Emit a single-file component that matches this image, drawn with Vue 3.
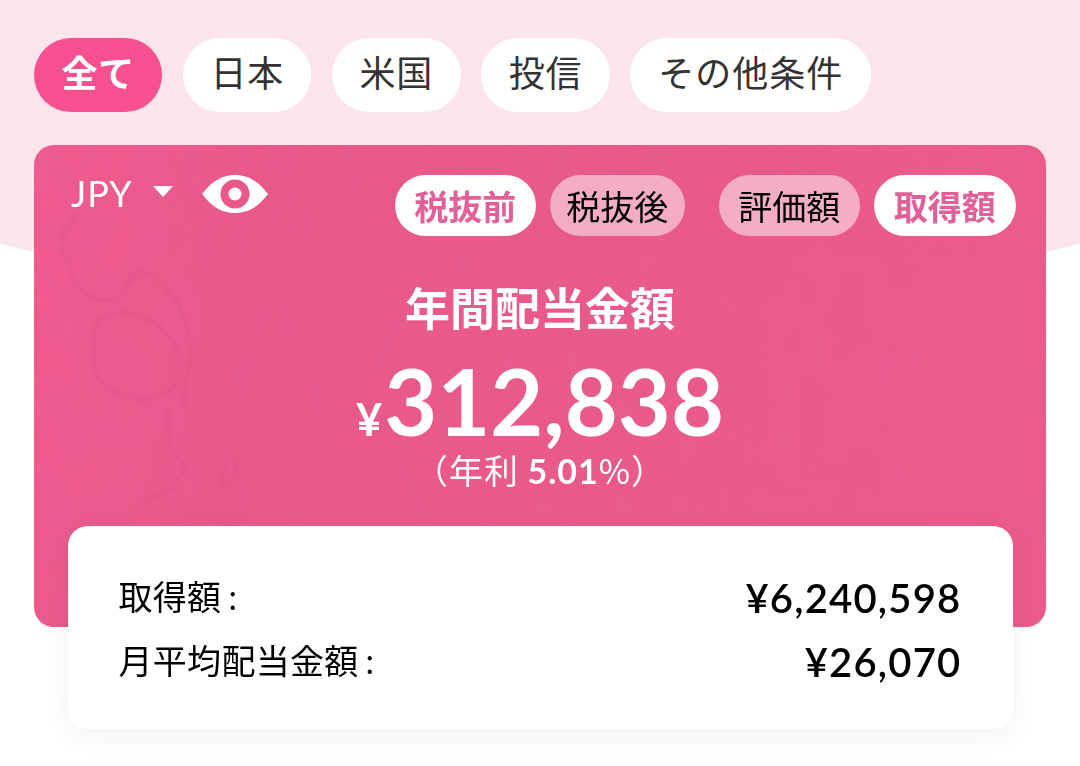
<script setup>
import { ref } from "vue";

// 絞り込みタブ
const filters = ["全て", "日本", "米国", "投信", "その他条件"];
const activeFilter = ref("全て");

const taxModes = ["税抜前", "税抜後"];
const activeTax = ref("税抜前");

const amountModes = ["評価額", "取得額"];
const activeAmount = ref("取得額");

const isVisible = ref(true);

const summary = ref({
    annual: "312,838",
    rate: "5.01",
    rows: [
        { label: "取得額", value: "¥6,240,598" },
        { label: "月平均配当金額", value: "¥26,070" },
    ],
});
</script>

<template>
    <div class="page">
        <nav class="filters">
            <button
                v-for="filter in filters"
                :key="filter"
                class="filter"
                :class="{ active: activeFilter === filter }"
                @click="activeFilter = filter"
            >
                {{ filter }}
            </button>
        </nav>

        <section class="card">
            <!-- 紙の質感 -->
            <svg class="texture" viewBox="0 0 1012 482" preserveAspectRatio="none">
                <defs>
                    <filter id="paper" x="0" y="0" width="100%" height="100%">
                        <feTurbulence type="fractalNoise" baseFrequency="0.03 0.02" numOctaves="4" seed="4" />
                        <feColorMatrix values="0 0 0 0 0.6  0 0 0 0 0.2  0 0 0 0 0.4  0.5 0 0 0 -0.16" />
                    </filter>
                    <filter id="rough">
                        <feTurbulence type="fractalNoise" baseFrequency="0.06" numOctaves="3" seed="2" />
                        <feDisplacementMap in="SourceGraphic" scale="9" />
                        <feGaussianBlur stdDeviation="0.9" />
                    </filter>
                </defs>
                <rect width="1012" height="482" filter="url(#paper)" opacity="0.3" />
                <g class="stains" filter="url(#rough)">
                    <path d="M48 69 C24 87 22 105 34 117 C36 139 52 155 78 155 C90 151 96 138 101 130 C113 116 131 141 144 159 C153 175 157 192 156 216 C153 236 146 252 149 260" />
                    <path d="M79 168 C58 170 58 200 60 220 C64 242 85 254 114 253 C144 249 153 222 143 204 C131 180 109 165 79 168 Z" />
                    <path d="M134 264 C134 292 134 306 151 320 C139 342 124 350 111 360" />
                    <path d="M189 340 C183 324 203 307 204 317 C203 329 197 338 189 340 Z" />
                </g>
            </svg>

            <div class="toolbar">
                <div class="currency">
                    <span>JPY</span>
                    <svg class="caret" viewBox="0 0 20 11"><path d="M0 0H20L10 11Z" /></svg>
                </div>
                <button class="eye" @click="isVisible = !isVisible">
                    <svg viewBox="0 0 66 38">
                        <path d="M0 19C10 6 20 0 33 0S56 6 66 19C56 32 46 38 33 38S10 32 0 19Z" fill="#fff" />
                        <circle cx="33" cy="19" r="14.5" fill="#ea588a" />
                        <circle cx="33" cy="19" r="6.5" fill="#fff" />
                    </svg>
                </button>
                <div class="toggles">
                    <button
                        v-for="mode in taxModes"
                        :key="mode"
                        class="toggle"
                        :class="{ active: activeTax === mode }"
                        @click="activeTax = mode"
                    >
                        {{ mode }}
                    </button>
                </div>
                <div class="toggles">
                    <button
                        v-for="mode in amountModes"
                        :key="mode"
                        class="toggle"
                        :class="{ active: activeAmount === mode }"
                        @click="activeAmount = mode"
                    >
                        {{ mode }}
                    </button>
                </div>
            </div>

            <h2>年間配当金額</h2>
            <p class="amount"><span class="yen">¥</span>{{ isVisible ? summary.annual : "***" }}</p>
            <p class="rate">（年利 <b>{{ summary.rate }}</b>%）</p>

            <div class="details">
                <div v-for="row in summary.rows" :key="row.label" class="row">
                    <span class="label">{{ row.label }}<i>:</i></span>
                    <span class="value">{{ row.value }}</span>
                </div>
            </div>
        </section>
    </div>
</template>

<style>
body {
    margin: 0;
    background: #fff;
}
</style>

<style scoped>
.page {
    box-sizing: border-box;
    height: 766px;
    padding: 38px 34px 0;
    overflow: hidden;
    background: radial-gradient(ellipse 900px 310px at 540px -4px, #fce4ec 99.8%, #fff 100%);
    font-family: Lato, "Noto Sans CJK JP", sans-serif;
}

button {
    border: none;
    padding: 0;
    font-family: "Noto Sans CJK JP", sans-serif;
    cursor: pointer;
}

.filters {
    display: flex;
    gap: 20.7px;
}

.filter {
    height: 74px;
    padding: 0 0 7px;
    border-radius: 37px;
    background: #fff;
    color: #333;
    font-size: 36px;
    line-height: 67px;
    letter-spacing: 0.8px;
    white-space: nowrap;
}

.filter:not(:last-child) {
    width: 128.4px;
}

.filter:last-child {
    width: 241px;
    letter-spacing: 1px;
}

.filter.active {
    background: #f65090;
    color: #fff;
    font-weight: bold;
}

.card {
    position: relative;
    box-sizing: border-box;
    height: 482px;
    margin-top: 33px;
    padding-top: 30px;
    border-radius: 20px;
    background: linear-gradient(100deg, #f05b90 0%, #ea588b 22%, #ea598b 60%, #ed5a8d 100%);
    color: #fff;
}

.texture {
    position: absolute;
    inset: 0;
    width: 100%;
    height: 100%;
    border-radius: 20px;
}

.stains path {
    fill: none;
    stroke: #cf4c7d;
    stroke-width: 2.5;
    opacity: 0.25;
}

.toolbar {
    position: relative;
    display: flex;
    align-items: flex-start;
    padding: 0 30.5px 0 37px;
}

.currency {
    display: flex;
    align-items: center;
    width: 102px;
    height: 38px;
    font-size: 36px;
    line-height: 38px;
    letter-spacing: 1px;
}

.currency span {
    margin-top: -2px;
}

.caret {
    width: 20px;
    height: 11px;
    margin: 0 0 6px auto;
    fill: #fff;
}

.eye {
    width: 66px;
    height: 38px;
    margin: 0 auto 0 29px;
    background: none;
}

.eye svg {
    display: block;
    width: 66px;
    height: 38px;
}

.toggles {
    display: flex;
    gap: 14px;
}

.toggles + .toggles {
    margin-left: 34px;
}

.toggle {
    width: 141.5px;
    height: 61px;
    border-radius: 31px;
    background: rgba(255, 255, 255, 0.5);
    color: #000;
    font-size: 34px;
    line-height: 61px;
}

.toggle.active {
    background: #fff;
    color: #e0609a;
    font-weight: bold;
}

.toggle + .toggle:not(.active) {
    width: 134.5px;
}

h2 {
    position: relative;
    margin: 41px 0 0;
    font-family: "Noto Sans CJK JP", sans-serif;
    font-size: 45px;
    line-height: 60px;
    text-align: center;
}

.amount {
    position: relative;
    margin: 18px 0 0;
    font-size: 91.5px;
    font-weight: bold;
    line-height: 92px;
    text-align: center;
}

.yen {
    margin-right: 2px;
    font-size: 45px;
}

.rate {
    position: relative;
    margin: -15px 0 0;
    font-family: "Noto Sans CJK JP", sans-serif;
    font-size: 34px;
    line-height: 40px;
    letter-spacing: 1px;
    text-align: center;
}

.rate b {
    font-family: Lato, sans-serif;
}

.details {
    position: absolute;
    top: 381px;
    left: 33.5px;
    right: 33.5px;
    box-sizing: border-box;
    height: 202.5px;
    padding: 40px 51px 0;
    border-radius: 20px;
    background: #fff;
    box-shadow: 0 6px 28px rgba(0, 0, 0, 0.06);
    color: #000;
}

.row {
    display: flex;
    justify-content: space-between;
    height: 64px;
    line-height: 64px;
}

.label {
    margin-top: -1px;
    font-size: 34px;
    letter-spacing: 0.3px;
}

.label i {
    margin-left: 7px;
    font-style: normal;
}

.value {
    font-size: 40px;
    font-weight: 600;
    letter-spacing: 1.2px;
}
</style>
